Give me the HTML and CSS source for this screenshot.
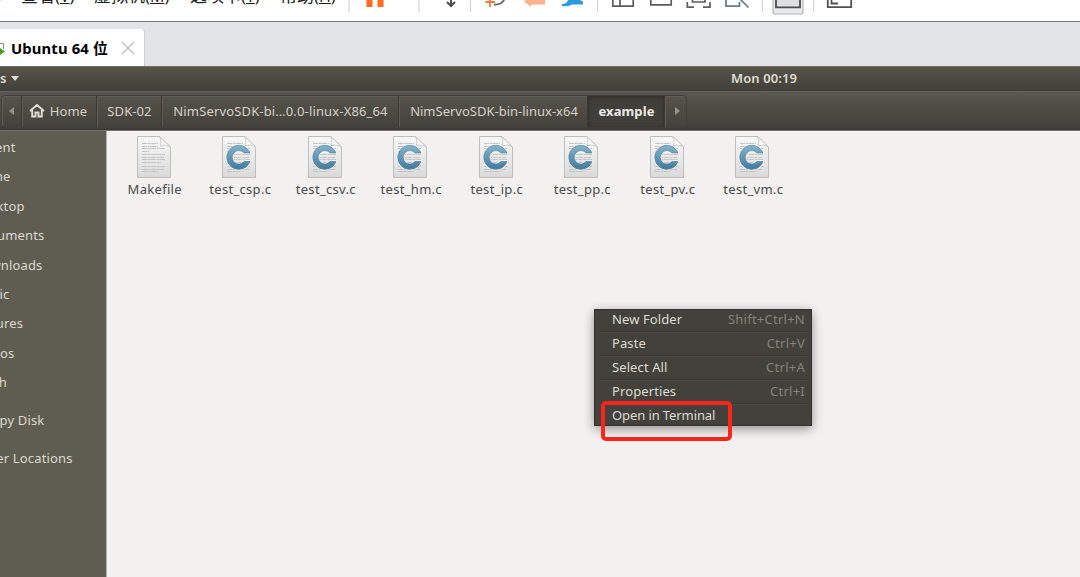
FILE: index.html
```
<!DOCTYPE html>
<html lang="zh">
<head>
  <meta charset="UTF-8" />
  <meta name="viewport" content="width=device-width, initial-scale=1.0"/>
  <title>Ubuntu 64 位</title>
  <link rel="stylesheet" href="styles.css">
</head>
<body>

<!-- shared icons -->
<svg class="defs" width="0" height="0">
  <defs>
    <linearGradient id="paper" x1="0" y1="0" x2="0" y2="1">
      <stop offset="0" stop-color="#f8f8f8"/>
      <stop offset="1" stop-color="#dadada"/>
    </linearGradient>
    <linearGradient id="blue" x1="0" y1="0" x2="0" y2="1">
      <stop offset="0" stop-color="#85b3ca"/>
      <stop offset="1" stop-color="#427b9f"/>
    </linearGradient>
    <symbol id="page" viewBox="0 0 36 44">
      <path d="M1.500 1.500H24L34.500 12V42.500H1.500Z" fill="url(#paper)" stroke="#bdbfbd"/>
      <path d="M23.500 1.500L34 11.500Q29 9 24.500 10.500Q26 6 23.500 1.500Z" fill="#fff" stroke="#c2c2c2" stroke-width=".8"/>
      <path d="M6 8.500H22M6 11.500H22M6 13.500H29M6 16.500H13M6 19.500H29M6 22.500H28M6 24.500H29M6 27.500H25M6 31.500H29M6 34.500H28M6 36.500H22" fill="none" stroke="#c4c4c4" stroke-width="1" stroke-dasharray="5 .6 3 .5"/>
    </symbol>
    <symbol id="cfile" viewBox="0 0 36 44">
      <use href="#page"/>
      <path d="M29 18A12 12 0 1 0 29 26.600H23A6.700 6.700 0 1 1 23 18Z" fill="url(#blue)" stroke="#fff" stroke-opacity=".6" stroke-width="2"/>
      <path d="M29 18A12 12 0 1 0 29 26.600H23A6.700 6.700 0 1 1 23 18Z" fill="url(#blue)" stroke="#487f9f" stroke-width=".6"/>
    </symbol>
  </defs>
</svg>

<div class="menubar">
  <span class="menu menu-file">)</span>
  <span class="menu menu-view">查看(<u>V</u>)</span>
  <span class="menu menu-vm">虚拟机(<u>M</u>)</span>
  <span class="menu menu-tabs">选项卡(<u>T</u>)</span>
  <span class="menu menu-help">帮助(<u>H</u>)</span>
  <svg class="tools" width="520" height="21" viewBox="340 0 520 21">
    <g fill="none" stroke="#d5d5d5" stroke-width="1.200">
      <path d="M349 0V12M419 0V12M470.500 0V12M597.500 0V12M762.500 0V12M813.500 0V12"/>
    </g>
    <path d="M366.500 0H372.500V7H366.500ZM377.500 0H383.500V7H377.500Z" fill="#ff6a1f"/>
    <path d="M451 0V6M447 2L451 6L455 2" fill="none" stroke="#4e4e4e" stroke-width="2"/>
    <path d="M490 0V7M485.500 2H495" fill="none" stroke="#f2793c" stroke-width="1.800"/>
    <path d="M494 4.500Q502 5 504.500 -1" fill="none" stroke="#666" stroke-width="1.800"/>
    <path d="M524 1.500L531 -4V-1H545V4.500H531V7Z" fill="#ffb08d"/>
    <path d="M568 0H580L583 1.500V4.500H572Q569 7 562 6V4Q567 4 568 0Z" fill="#2b9be0"/>
    <g fill="none" stroke="#5c5c5c" stroke-width="1.700">
      <path d="M612.800 0V6.200H633.200V0M620 0V6"/>
      <path d="M650.800 0V4.800H671.200V0"/>
      <path d="M687.300 2V7.200H694M703 7.200H710V2M692.500 0V2H705V0"/>
      <path d="M726 0V6.200H739.500V2" stroke="#63798c"/>
      <path d="M740 -1L748.500 7.500" stroke="#63798c"/>
    </g>
    <rect x="773" y="-6" width="30" height="20" rx="2" fill="#e8e9ea" stroke="#c3c5c7" stroke-width="1.500"/>
    <path d="M776 -4V7.300H800V-4" fill="#dddfe1" stroke="#4d4d4d" stroke-width="1.800"/>
    <path d="M827.800 0V7.200H851.200V0M831.500 0V3.500H838" fill="none" stroke="#505050" stroke-width="1.800"/>
  </svg>
</div>

<div class="tabstrip">
  <div class="tab">
    <svg class="tab-icon" width="5" height="16" viewBox="0 0 5 16">
      <path d="M0 2.500H3.500V8" fill="none" stroke="#8a8a8a"/>
      <path d="M0 7L5 10.500L0 14Z" fill="#43a020"/>
    </svg>
    <span class="tab-title">Ubuntu 64 位</span>
    <svg class="tab-close" width="14" height="14" viewBox="0 0 14 14">
      <path d="M1 1L13 13M13 1L1 13" stroke="#c6c6c6" stroke-width="1.700"/>
    </svg>
  </div>
</div>

<div class="panel">
  <span class="app-menu">s</span>
  <span class="app-arrow"></span>
  <span class="clock">Mon 00:19</span>
</div>

<div class="headerbar">
  <div class="pathbar">
    <div class="crumb prev"><i class="arrow-left"></i></div>
    <div class="crumb home">
      <svg width="16" height="14" viewBox="0 0 16 14">
        <path d="M1 7L8 1L15 7M3.200 6V12.500H6.500V8.500H9.500V12.500H12.800V6" fill="none" stroke="#e0ded6" stroke-width="1.900"/>
      </svg>
      <span>Home</span>
    </div>
    <div class="crumb sdk">SDK-02</div>
    <div class="crumb linux86">NimServoSDK-bi…0.0-linux-X86_64</div>
    <div class="crumb linux64">NimServoSDK-bin-linux-x64</div>
    <div class="crumb current">example</div>
    <div class="crumb next"><i class="arrow-right"></i></div>
  </div>
</div>

<div class="window">
  <div class="sidebar">
    <div class="place">Recent</div>
    <div class="place">Home</div>
    <div class="place">Desktop</div>
    <div class="place">Documents</div>
    <div class="place">Downloads</div>
    <div class="place">Music</div>
    <div class="place">Pictures</div>
    <div class="place">Videos</div>
    <div class="place">Trash</div>
    <div class="place spaced">Floppy Disk</div>
    <div class="place spaced">Other Locations</div>
  </div>

  <div class="files">
    <div class="file"><svg width="36" height="44"><use href="#page"/></svg><span>Makefile</span></div>
    <div class="file"><svg width="36" height="44"><use href="#cfile"/></svg><span>test_csp.c</span></div>
    <div class="file"><svg width="36" height="44"><use href="#cfile"/></svg><span>test_csv.c</span></div>
    <div class="file"><svg width="36" height="44"><use href="#cfile"/></svg><span>test_hm.c</span></div>
    <div class="file"><svg width="36" height="44"><use href="#cfile"/></svg><span>test_ip.c</span></div>
    <div class="file"><svg width="36" height="44"><use href="#cfile"/></svg><span>test_pp.c</span></div>
    <div class="file"><svg width="36" height="44"><use href="#cfile"/></svg><span>test_pv.c</span></div>
    <div class="file"><svg width="36" height="44"><use href="#cfile"/></svg><span>test_vm.c</span></div>
  </div>
</div>

<div class="context-menu">
  <div class="item"><span>New Folder</span><span class="key">Shift+Ctrl+N</span></div>
  <div class="item"><span>Paste</span><span class="key">Ctrl+V</span></div>
  <div class="item"><span>Select All</span><span class="key">Ctrl+A</span></div>
  <div class="item"><span>Properties</span><span class="key">Ctrl+I</span></div>
  <div class="item"><span class="terminal">Open in Terminal</span></div>
</div>
<div class="highlight"></div>

</body>
</html>
```
FILE: styles.css
```
* {
  box-sizing: border-box;
}

body {
  margin: 0;
  width: 1080px;
  height: 577px;
  overflow: hidden;
  position: relative;
  display: flex;
  flex-direction: column;
  font-family: "Noto Sans", "Open Sans", sans-serif;
  font-size: 13px;
  letter-spacing: 0.1px;
  background: #f2f1f0;
}

svg {
  display: block;
  flex: none;
}

.defs {
  position: absolute;
}

/* host window */
.menubar {
  flex: none;
  display: flex;
  height: 21px;
  background: #fff;
  overflow: hidden;
}

.menu {
  flex: none;
  margin-top: -14px;
  height: 20px;
  line-height: 20px;
  font-family: "Open Sans", "Noto Sans CJK SC", sans-serif;
  font-size: 17px;
  letter-spacing: 0;
  color: #222;
  white-space: nowrap;
}

.menu u {
  font-size: 16px;
  text-underline-offset: 1px;
}

.menu-file { width: 25px; margin-left: -4px; }
.menu-view { width: 73px; }
.menu-vm { width: 96px; }
.menu-tabs { width: 90px; }
.menu-help { width: 60px; }

.tabstrip {
  flex: none;
  height: 45px;
  padding-top: 7px;
  border-top: 1px solid #77787a;
  background: #e3e4e6;
}

.tab {
  display: flex;
  align-items: center;
  width: 145px;
  height: 37px;
  border-right: 1px solid #cfd0d2;
  border-top-right-radius: 4px;
  background: #fff;
}

.tab-title {
  width: 98px;
  margin: 1px 0 0 6px;
  font-family: "Noto Sans", "Noto Sans CJK SC", sans-serif;
  font-size: 14.800px;
  letter-spacing: 0.15px;
  line-height: 20px;
  font-weight: bold;
  color: #000;
  white-space: nowrap;
}

.tab-icon {
  margin-top: 2px;
}

.tab-close {
  margin: 1px 0 0 12px;
}

/* guest desktop */
.panel {
  flex: none;
  display: flex;
  align-items: center;
  height: 25px;
  padding-bottom: 2px;
  border-top: 1px solid #6e6d64;
  background: linear-gradient(#57544b, #413f3a);
  color: #dfdbd2;
  font-weight: 600;
}

.app-menu {
  width: 11px;
}

.app-arrow {
  width: 0;
  border: 4px solid transparent;
  border-top: 5px solid #dfdbd2;
  border-bottom: 0;
}

.clock {
  margin-left: 712px;
}

.headerbar {
  flex: none;
  height: 39px;
  padding-top: 3px;
  border-top: 1px solid #66645a;
  border-bottom: 1px solid #35342f;
  background: linear-gradient(#5a574e, #403f3a);
}

.pathbar {
  display: flex;
  width: 686px;
  height: 33px;
  margin-left: 1px;
  border: 1px solid #403f39;
  border-radius: 4px;
  overflow: hidden;
  background: linear-gradient(#56534b, #44423c);
}

.crumb {
  flex: none;
  display: flex;
  align-items: center;
  justify-content: center;
  padding: 0 0 2px 1px;
  border-right: 1px solid #3a3934;
  box-shadow: inset 1px 1px #5f5c54;
  color: #d5d2c9;
  white-space: nowrap;
}

.prev { width: 20px; padding-right: 2px; }
.home { width: 75px; padding-right: 3px; gap: 5px; }
.sdk { width: 65px; }
.linux86 { width: 237px; letter-spacing: 0.15px; }
.linux64 { width: 189px; padding-left: 2px; letter-spacing: 0; }
.current {
  width: 77px;
  background: #403f3a;
  box-shadow: inset 0 1px 4px #2b2a27;
  color: #eeebe3;
  font-weight: bold;
}
.next {
  width: 21px;
  padding-left: 3px;
  border-right: 0;
}

.arrow-left,
.arrow-right {
  border: 4px solid transparent;
}

.arrow-left {
  border-right: 5px solid #96948d;
  border-left: 0;
}

.arrow-right {
  border-left: 5px solid #96948d;
  border-right: 0;
}

.window {
  flex: 1;
  display: flex;
  border-top: 1px solid #77736f;
}

/* the labels run off the left edge of the view */
.sidebar {
  flex: none;
  width: 107px;
  padding-top: 2px;
  border-right: 1px solid #b4b2ac;
  overflow: hidden;
  background: #5f5d51;
  color: #dbd8d0;
}

.place {
  height: 29.400px;
  line-height: 29px;
  margin-left: -27px;
  letter-spacing: 0.15px;
  white-space: nowrap;
}

.spaced {
  margin-top: 8.500px;
}

.files {
  display: flex;
  align-items: flex-start;
  padding: 4px 0 0 4px;
}

.file {
  display: flex;
  flex-direction: column;
  align-items: center;
  width: 85.500px;
  color: #4a4a4a;
}

.file span {
  margin: 1px 0 0 2px;
  line-height: 18px;
  letter-spacing: 0.3px;
}

.context-menu {
  position: absolute;
  left: 594px;
  top: 309px;
  width: 218px;
  height: 117px;
  padding: 0 5px;
  border: 1px solid #33322e;
  background: #43413b;
  box-shadow: 0 3px 10px rgba(0,0,0,0.4);
  color: #dfdbd2;
}

.item {
  display: flex;
  justify-content: space-between;
  height: 24px;
  padding: 0 1px 0 12px;
  line-height: 19px;
  border-bottom: 1px solid #4b4943;
  box-shadow: inset 0 -1px #393833;
}

.item:first-child {
  height: 23px;
}

.item:nth-child(n+2) {
  line-height: 21px;
}

.item:last-child {
  border: 0;
  box-shadow: none;
}

.terminal {
  letter-spacing: -0.1px;
}

.key {
  color: #85837c;
  letter-spacing: 0.25px;
}

.highlight {
  position: absolute;
  left: 601px;
  top: 401px;
  width: 131px;
  height: 40px;
  border: 4px solid #f9251a;
  border-radius: 5px;
}
```
